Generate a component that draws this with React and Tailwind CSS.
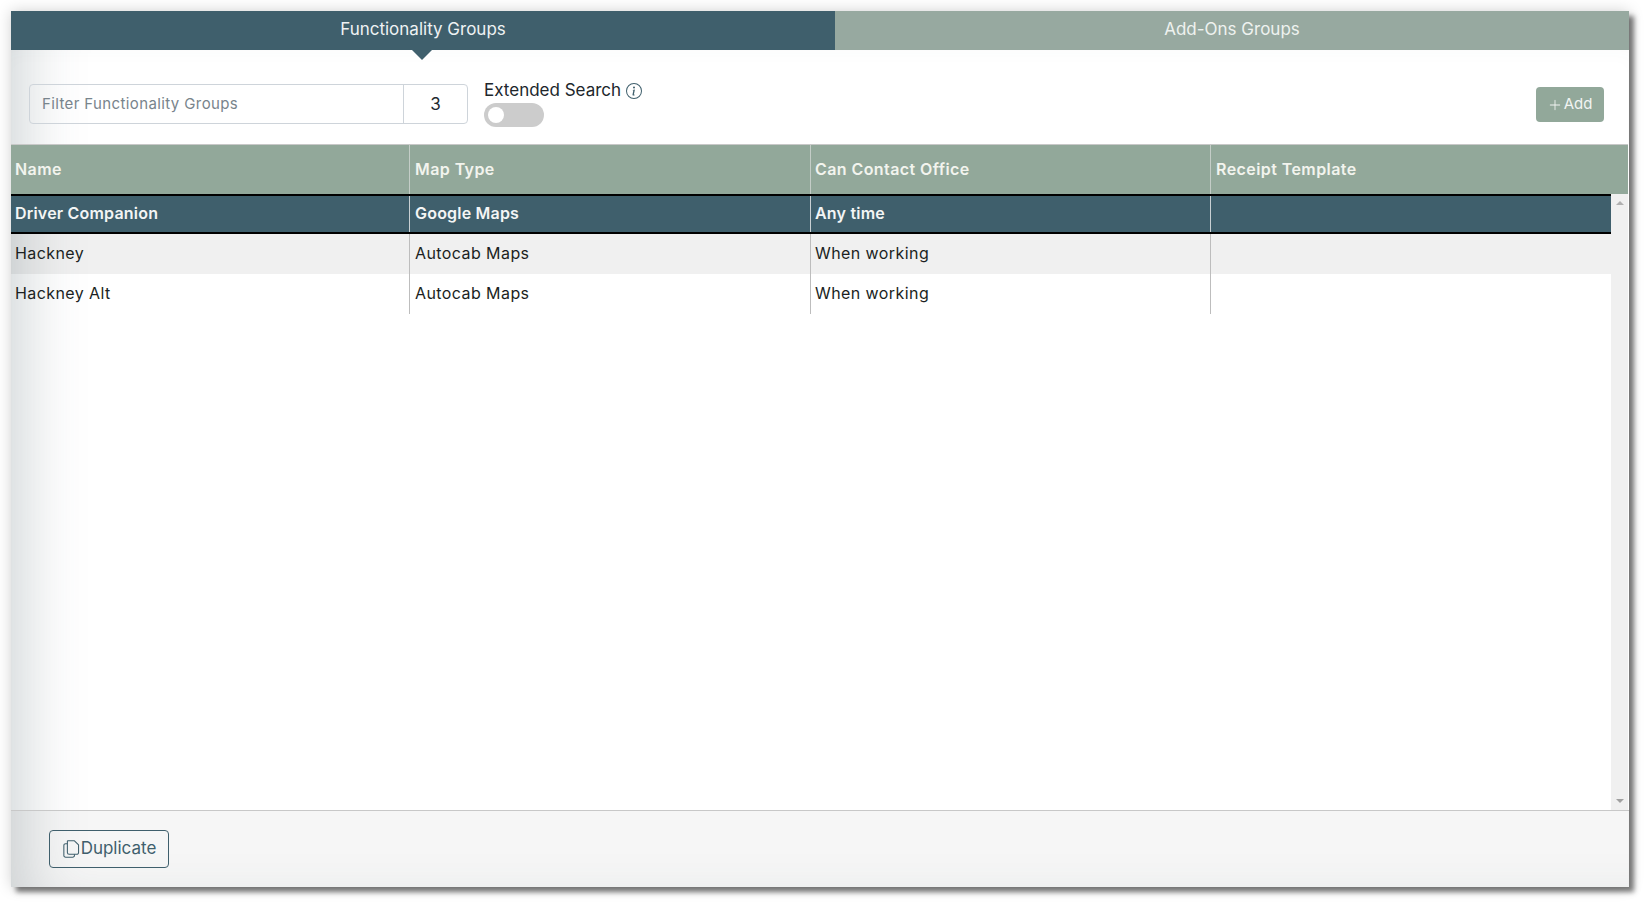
import React from "react";
import { BsInfoCircle, BsPlusLg } from "react-icons/bs";

function Row({ cells, selected, shaded }) {
  const rowCls = selected
    ? "bg-[#3f5f6c] text-[#f3f5f5] font-semibold border-y-2 border-black tracking-[0.2px]"
    : shaded
    ? "bg-black/[0.06] text-[#1b1f22] tracking-[0.42px]"
    : "text-[#1b1f22] tracking-[0.42px]";
  const sep = selected ? "border-[#c9d0d3]" : "border-[#bdbdbd]";
  return (
    <div className={`grid grid-cols-[399px_401px_400px_1fr] h-10 items-stretch text-[16px] ${rowCls}`}>
      <div className={`pl-1 pb-[2px] flex items-center border-r ${sep}`}>{cells[0]}</div>
      <div className={`pl-[5px] pb-[2px] flex items-center border-r ${sep}`}>{cells[1]}</div>
      <div className={`pl-1 pb-[2px] flex items-center border-r ${sep}`}>{cells[2]}</div>
      <div className="pl-[5px] flex items-center"></div>
    </div>
  );
}

export default function App() {
  return (
    <div className="w-[1648px] h-[906px] bg-white p-[11px] font-['Inter',sans-serif]">
      <div className="w-[1618px] h-[876px] flex flex-col bg-white shadow-[inset_44px_0_60px_-30px_rgba(70,90,100,0.25),inset_0_50px_24px_-16px_rgba(70,90,100,0.05),5px_5px_5px_rgba(0,0,0,0.5),0_0_14px_rgba(0,0,0,0.18)]">
        <div className="flex h-[39px] shrink-0 text-[17px]">
          <div className="relative w-[824px] bg-[#3f5f6c] text-[#eef2f3] flex items-center justify-center pb-px">
            Functionality Groups
            <div className="absolute left-[401px] top-[39px] w-0 h-0 border-x-[10px] border-x-transparent border-t-[10px] border-t-[#3f5f6c]"></div>
          </div>
          <div className="flex-1 bg-[#97a9a0] text-[#eef2ef] flex items-center justify-center pb-px">Add-Ons Groups</div>
        </div>

        <div className="h-[94px] shrink-0 flex items-start pl-[18px] pr-[25px]">
          <div className="mt-[34px] flex w-[439px] h-10 border border-[#ced4da] rounded">
            <input
              readOnly
              placeholder="Filter Functionality Groups"
              className="w-[374px] h-full pl-3 pb-[2px] text-[15px] tracking-[0.38px] bg-transparent outline-none placeholder:text-[#78848c] border-r border-[#ced4da]"
            />
            <div className="flex-1 flex items-center justify-center pt-[2px] text-[17px] text-[#1f2a30]">3</div>
          </div>
          <div className="ml-4 mt-[29px] flex flex-col">
            <div className="flex items-center h-[24px] text-[17px] text-[#20262b] gap-[5px]">
              Extended Search
              <BsInfoCircle className="w-4 h-4 text-[#3f5f6c]" />
            </div>
            <div className="w-[60px] h-6 rounded-full bg-[#cccccc] flex items-center pl-1">
              <div className="w-4 h-4 rounded-full bg-white"></div>
            </div>
          </div>
          <div className="ml-auto mt-[37px] w-[68px] h-[35px] rounded bg-[#92a89a] text-[#f1f4f2] text-[15px] flex items-center justify-center gap-[2px]">
            <BsPlusLg className="w-[14px] h-[14px]" />
            Add
          </div>
        </div>

        <div className="flex-1 min-h-0 mr-px flex flex-col border-t border-[#c8c8c8]">
          <div className="grid grid-cols-[399px_401px_400px_1fr] h-[49px] shrink-0 bg-[#92a89a] text-[#f2f4ee] text-[16px] font-semibold tracking-[0.42px]">
            <div className="pl-1 pb-[2px] flex items-center border-r border-[#c4cdc7]">Name</div>
            <div className="pl-[5px] pb-[2px] flex items-center border-r border-[#c4cdc7]">Map Type</div>
            <div className="pl-1 pb-[2px] flex items-center border-r border-[#c4cdc7]">Can Contact Office</div>
            <div className="pl-[5px] pb-[2px] flex items-center">Receipt Template</div>
          </div>
          <div className="flex-1 min-h-0 flex">
            <div className="flex-1 min-w-0">
              <Row selected cells={["Driver Companion", "Google Maps", "Any time"]} />
              <Row shaded cells={["Hackney", "Autocab Maps", "When working"]} />
              <Row cells={["Hackney Alt", "Autocab Maps", "When working"]} />
            </div>
            <div className="w-[17px] shrink-0 bg-[#f0f0f0] flex flex-col items-center justify-between py-[7px]">
              <div className="w-0 h-0 border-x-4 border-x-transparent border-b-[4px] border-b-[#b0b0b0]"></div>
              <div className="w-0 h-0 border-x-4 border-x-transparent border-t-[4px] border-t-[#a0a0a0]"></div>
            </div>
          </div>
        </div>

        <div className="h-[77px] shrink-0 border-t border-[#c8c8c8] bg-black/[0.035] pl-[38px] pt-[19px]">
          <div className="w-[120px] h-[38px] rounded border border-[#3f5f6c] text-[#3f5f6c] text-[17px] flex items-center justify-center">
            <svg viewBox="0 0 16 17" className="w-[19px] h-[20px]" fill="none" stroke="currentColor" strokeWidth="0.9" strokeLinejoin="round">
              <path d="M5 1.5h5.5l3.5 3.5v6.5a1.5 1.5 0 0 1-1.5 1.5H6a1.5 1.5 0 0 1-1.5-1.5V2a.5.5 0 0 1 .5-.5z" />
              <path d="M4.5 4H3a1.5 1.5 0 0 0-1.5 1.5V14A1.5 1.5 0 0 0 3 15.5h6a1.5 1.5 0 0 0 1.5-1.5v-1" />
            </svg>
            Duplicate
          </div>
        </div>
      </div>
    </div>
  );
}
